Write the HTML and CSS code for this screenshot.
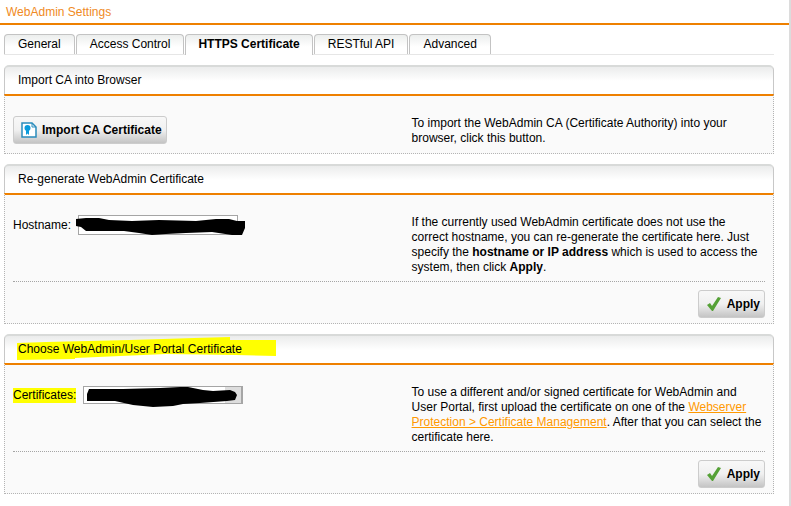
FILE: index.html
```html
<!DOCTYPE html>
<html lang="en">
<head>
    <meta charset="UTF-8">
    <meta name="viewport" content="width=device-width, initial-scale=1.0">
    <title>WebAdmin Settings</title>
    <link rel="stylesheet" href="styles.css">
</head>
<body>
    <h1>WebAdmin Settings</h1>
    <main>
        <nav class="tabs">
            <button type="button" class="tab">General</button>
            <button type="button" class="tab">Access Control</button>
            <button type="button" class="tab active">HTTPS Certificate</button>
            <button type="button" class="tab">RESTful API</button>
            <button type="button" class="tab">Advanced</button>
        </nav>

        <section class="panel">
            <h2>Import CA into Browser</h2>
            <div class="panel-body">
                <div class="row">
                    <div>
                        <button type="button" class="btn">
                            <svg width="16" height="16" viewBox="0 0 16 16">
                                <path d="M1 1H11L15 5V15H1Z" fill="#fff" stroke="#2a8cbc" stroke-width="1.5"/>
                                <path d="M11 1V5H15" fill="none" stroke="#2a8cbc"/>
                                <circle cx="6.5" cy="6" r="3" fill="#0a9bdc"/>
                                <path d="M5 8H8V13L6.500 11.500L5 13Z" fill="#0a9bdc"/>
                            </svg>
                            Import CA Certificate
                        </button>
                    </div>
                    <p>To import the WebAdmin CA (Certificate Authority) into your browser, click this button.</p>
                </div>
            </div>
        </section>

        <section class="panel">
            <h2>Re-generate WebAdmin Certificate</h2>
            <form class="panel-body">
                <div class="row">
                    <div class="field">
                        <label for="hostname">Hostname:</label>
                        <div class="control">
                            <input type="text" id="hostname">
                            <svg class="scribble" width="160" height="20" viewBox="0 0 160 20">
                                <path d="M-2 4L8 3L21 3L31 5L54 6L81 5L118 6L138 4L151 4L159 6H167V13L164 20L154 20L134 17L108 18L88 19L74 20L61 18L46 16L34 16L8 16L3 12L-2 11Z"/>
                            </svg>
                        </div>
                    </div>
                    <p>If the currently used WebAdmin certificate does not use the correct hostname, you can re-generate the certificate here. Just specify the <b>hostname or IP address</b> which is used to access the system, then click <b>Apply</b>.</p>
                </div>
                <div class="actions">
                    <button type="button" class="btn">
                        <svg width="16" height="16" viewBox="0 0 16 16">
                            <path d="M1 9L4 7L6 10L12 1L15 2L7 15H6Z" fill="#55a136"/>
                        </svg>
                        Apply
                    </button>
                </div>
            </form>
        </section>

        <section class="panel">
            <h2>
                <span class="marked">
                    <svg class="marker" width="258" height="24" viewBox="0 0 258 24">
                        <path d="M-1 6L28 5L70 4L111 3L145 2L176 1L212 0V3H258V19L218 18L148 17L57 21V22L-1 23Z" fill="#ff0"/>
                    </svg>
                    Choose WebAdmin/User Portal Certificate
                </span>
            </h2>
            <form class="panel-body">
                <div class="row">
                    <div class="field">
                        <label for="certificates" class="highlight">Certificates:</label>
                        <div class="control">
                            <select id="certificates"><option></option></select>
                            <svg class="scribble" width="160" height="18" viewBox="0 0 160 18">
                                <path d="M6 3H40L77 2L97 1L105 1L120 4L130 5L147 4L152 6L154 9L152 14L144 15L117 17L100 18L90 20L70 21L50 19L32 15H4V8Z"/>
                            </svg>
                        </div>
                    </div>
                    <p>To use a different and/or signed certificate for WebAdmin and User Portal, first upload the certificate on one of the <a href="#">Webserver Protection &gt; Certificate Management</a>. After that you can select the certificate here.</p>
                </div>
                <div class="actions">
                    <button type="button" class="btn">
                        <svg width="16" height="16" viewBox="0 0 16 16">
                            <path d="M1 9L4 7L6 10L12 1L15 2L7 15H6Z" fill="#55a136"/>
                        </svg>
                        Apply
                    </button>
                </div>
            </form>
        </section>
    </main>
</body>
</html>
```
FILE: styles.css
```css
* {
    box-sizing: border-box;
}
body {
    margin: 0;
    min-height: 100vh;
    border-right: 2px solid #dcdcdc;
    background-color: #fff;
    color: #000;
    font-family: "Liberation Sans", Arial, sans-serif;
    font-size: 12px;
    line-height: 15px;
}
h1, h2, p {
    margin: 0;
    font-size: 12px;
    font-weight: normal;
}
h1 {
    padding: 5px 6px 3px;
    color: #f08a24;
    border-bottom: 2px solid #ee8000;
}
main {
    padding: 9px 15px 10px 4px;
}
button, input, select {
    font: inherit;
    color: inherit;
}
.tabs {
    display: flex;
    gap: 1px;
    margin-bottom: 10px;
    border-bottom: 1px solid #e6e6e6;
}
.tab {
    height: 20px;
    padding: 0 13px;
    border: 1px solid #c3c3c3;
    border-bottom: none;
    border-radius: 4px 4px 0 0;
    background: linear-gradient(#eceeed, #fff 12px);
}
.tab.active {
    height: 21px;
    margin-bottom: -1px;
    padding: 0 12px 1px;
    font-weight: bold;
}
.panel {
    margin-bottom: 10px;
}
.panel h2 {
    padding: 6px 13px;
    border: 1px solid #c8c8c8;
    border-top: 2px solid #d8dad9;
    border-bottom: none;
    border-radius: 5px 5px 0 0;
    background: linear-gradient(#ebecec, #fff 14px);
}
.panel-body {
    padding: 20px 8px 5px;
    border: 1px dotted #b4b4b4;
    border-top: 2px solid #ee8000;
    background-color: #fafafa;
}
.row {
    display: grid;
    grid-template-columns: 53% 1fr;
    padding-bottom: 2px;
}
.field {
    display: flex;
    align-items: center;
    align-self: start;
    gap: 7px;
    height: 20px;
}
.control {
    position: relative;
}
input {
    display: block;
    width: 160px;
    height: 20px;
    padding: 0 3px;
    border: 1px solid #a5a5a5;
    background-color: #fff;
}
select {
    display: block;
    width: 160px;
    height: 18px;
    appearance: none;
    border: 1px solid #a5a5a5;
    border-right-width: 2px;
    border-radius: 0;
    background: linear-gradient(#ddd, #ddd) right / 16px 100% no-repeat #fff;
}
.scribble {
    position: absolute;
    left: 0;
    top: 0;
    overflow: visible;
    pointer-events: none;
}
.highlight {
    background-color: #ff0;
}
.marked {
    position: relative;
    z-index: 0;
}
.marker {
    position: absolute;
    left: 0;
    top: -5px;
    z-index: -1;
    overflow: visible;
}
a {
    color: #f90;
}
.actions {
    display: flex;
    justify-content: flex-end;
    margin-top: 4px;
    padding-top: 8px;
    border-top: 1px dotted #a5a5a5;
}
.btn {
    display: flex;
    align-items: center;
    gap: 5px;
    height: 28px;
    padding: 0 4px 0 7px;
    border: 1px solid #ccc;
    border-radius: 3px;
    background: linear-gradient(#f8f8f8, #f0f0f0 50%, #c4c4c4);
    font-weight: bold;
}
```
